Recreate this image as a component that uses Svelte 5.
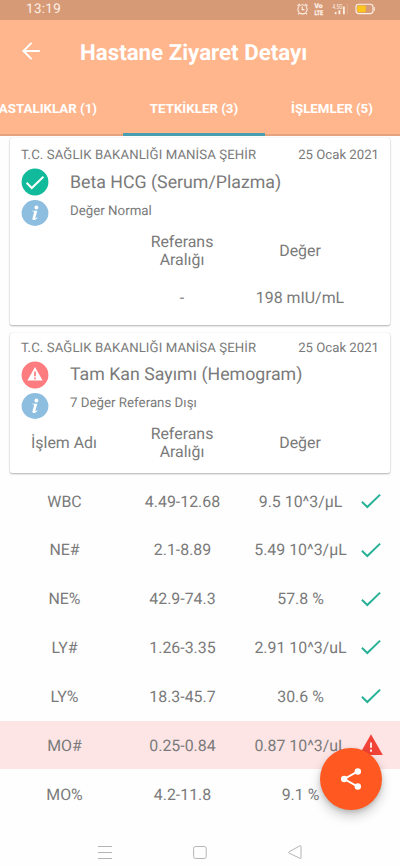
<script>
  const results = [
    { name: 'WBC', range: '4.49-12.68', value: '9.5 10^3/µL', ok: true },
    { name: 'NE#', range: '2.1-8.89', value: '5.49 10^3/µL', ok: true },
    { name: 'NE%', range: '42.9-74.3', value: '57.8 %', ok: true },
    { name: 'LY#', range: '1.26-3.35', value: '2.91 10^3/uL', ok: true },
    { name: 'LY%', range: '18.3-45.7', value: '30.6 %', ok: true },
    { name: 'MO#', range: '0.25-0.84', value: '0.87 10^3/uL', ok: false },
    { name: 'MO%', range: '4.2-11.8', value: '9.1 %', ok: true }
  ];
</script>

{#snippet cardHead(title, note, ok)}
  <div class="meta">
    <span class="hospital">T.C. SAĞLIK BAKANLIĞI MANİSA ŞEHİR</span>
    <span class="date">25 Ocak 2021</span>
  </div>
  <div class="line title-line">
    <svg width="28" height="28" viewBox="0 0 28 28">
      {#if ok}
        <circle cx="14" cy="14" r="13.4" fill="#10ba9b" />
        <path d="M5.6 14.8l5.2 5.2L22.4 8.8" fill="none" stroke="#fff" stroke-width="2" />
      {:else}
        <circle cx="14" cy="14" r="13.4" fill="#fd7c80" />
        <path d="M14 6L21.6 19.4H6.4z" fill="#fff" />
        <path d="M14 10.6v4.6M14 16.4v1.8" stroke="#fd7c80" stroke-width="1.7" />
      {/if}
    </svg>
    <h2>{title}</h2>
  </div>
  <div class="line note-line">
    <svg width="28" height="28" viewBox="0 0 28 28">
      <ellipse cx="14" cy="14" rx="13.4" ry="12.9" fill="#8dbee0" />
      <circle cx="15.4" cy="8.5" r="1.9" fill="#fff" />
      <path d="M11 11.7h5.3l-2 7.2c-.2.8.5.7 1.7-.7l.6.5c-2 2.8-5.6 3.4-5.1.6l1.6-6.3c.1-.5-.4-.6-2.1-.7z" fill="#fff" />
    </svg>
    <p>{note}</p>
  </div>
{/snippet}

<div class="screen">
  <header>
    <div class="status">
      <span class="clock">13:19</span>
      <svg width="78" height="20" viewBox="297 0 78 20">
        <g fill="none" stroke="#fff0e6" stroke-width="1.1">
          <circle cx="302.5" cy="9.3" r="4.6" />
          <path d="M302.2 6.6v3h2.2M297.4 5.8l2.3-2M307.6 5.8l-2.3-2M299.2 13.2l-1 1.2M305.8 13.2l1 1.2" />
        </g>
        <g fill="#fff0e6" stroke="#fff0e6" stroke-width=".3" font-family="Roboto, sans-serif" font-weight="700">
          <text x="314.5" y="8.4" font-size="6.4" textLength="8" lengthAdjust="spacingAndGlyphs">Vo</text>
          <text x="314.5" y="14.5" font-size="6.4" textLength="8.5" lengthAdjust="spacingAndGlyphs">LTE</text>
          <text x="332.5" y="9" font-size="7" font-weight="400" stroke="none" textLength="10" lengthAdjust="spacingAndGlyphs">4.5G</text>
        </g>
        <path d="M334.8 12h1.7v2.2h-1.7zM338.5 10.2h1.8v4h-1.8zM343 6.5h1.8v7.7H343z" fill="#fff0e6" />
        <path d="M347.5 4v10" stroke="#e5b797" stroke-width=".6" />
        <rect x="356" y="4.2" width="17" height="9.4" rx="2.8" fill="none" stroke="#fff0e6" stroke-width="1.1" />
        <path d="M374.3 7.2v3.5" stroke="#fff0e6" stroke-width="1" />
        <rect x="357.3" y="5.6" width="8.5" height="6.6" rx="1.3" fill="#fcc51e" />
      </svg>
    </div>
    <div class="appbar">
      <svg width="20" height="20" viewBox="0 0 20 20" fill="none" stroke="#fff" stroke-width="1.9">
        <path d="M18.8 10H2.8M10.6 1.8L2.4 10l8.2 8.2" />
      </svg>
      <h1>Hastane Ziyaret Detayı</h1>
    </div>
    <nav>
      <button class="first"><span>HASTALIKLAR (1)</span></button>
      <button class="active"><span>TETKİKLER (3)</span></button>
      <button class="last"><span>İŞLEMLER (5)</span></button>
    </nav>
  </header>

  <main>
    <section class="card">
      {@render cardHead('Beta HCG (Serum/Plazma)', 'Değer Normal', true)}
      <div class="cols heads"><span></span><span>Referans<br />Aralığı</span><span>Değer</span></div>
      <div class="cols single"><span></span><span>-</span><span>198 mIU/mL</span></div>
    </section>
    <section class="card second">
      {@render cardHead('Tam Kan Sayımı (Hemogram)', '7 Değer Referans Dışı', false)}
      <div class="cols heads"><span>İşlem Adı</span><span>Referans<br />Aralığı</span><span>Değer</span></div>
    </section>
    <div class="results">
      {#each results as r}
        <div class="row" class:bad={!r.ok}>
          <span>{r.name}</span><span>{r.range}</span><span>{r.value}</span>
          <svg width="24" height="24" viewBox="0 0 24 24">
            {#if r.ok}
              <path d="M2.9 12.8l5.4 5.2L21.1 5.6" fill="none" stroke="#27b196" stroke-width="2" />
            {:else}
              <path d="M12 1.2L23.8 22H.2z" fill="#f14337" />
              <path d="M12 9.5v5.2M12 16.6v2.2" stroke="#fde5e5" stroke-width="2" />
            {/if}
          </svg>
        </div>
      {/each}
    </div>
  </main>

  <footer>
    <svg width="14" height="14" viewBox="0 0 14 14" fill="none" stroke="#b4b4b4"><path d="M0 1.5h14M0 7.5h14M0 13.5h14" /></svg>
    <svg width="14" height="14" viewBox="0 0 14 14" fill="none" stroke="#b4b4b4"><rect x=".6" y="1.5" width="12.6" height="12" rx="2" /></svg>
    <svg width="14" height="14" viewBox="0 0 14 14" fill="none" stroke="#b4b4b4" stroke-linejoin="round"><path d="M13 1.6v11.2q0 1-1 .6L1 8q-1-.6 0-1.2L12 .8q1-.4 1 .8z" /></svg>
  </footer>

  <button class="fab" aria-label="Paylaş">
    <svg width="24" height="24" viewBox="0 0 24 24" fill="#fff">
      <path d="M18.8 4.3L5.2 12l13.6 7.7" fill="none" stroke="#fff" stroke-width="1.9" />
      <circle cx="18.8" cy="4.5" r="3.2" /><circle cx="5.2" cy="12" r="3.2" /><circle cx="18.8" cy="19.5" r="3.2" />
    </svg>
  </button>
</div>

<style>
  .screen {
    position: relative;
    width: 400px;
    height: 866px;
    overflow: hidden;
    display: flex;
    flex-direction: column;
    background: #fefefe;
    color: #7a7a7a;
    font-family: Roboto, 'Noto Sans', sans-serif;
    text-rendering: geometricPrecision;
  }
  svg { display: block; flex: none; }
  h1, h2, p { margin: 0; font-weight: 400; white-space: nowrap; }
  button { border: 0; padding: 0; background: none; font: inherit; color: inherit; }
  header { height: 136px; flex: none; background: #ffb68d; color: #fff; }
  .status {
    height: 20px;
    display: flex;
    justify-content: space-between;
    padding: 0 25px 0 26px;
    background: #d69a77;
  }
  .clock { font-size: 13.4px; line-height: 19px; letter-spacing: .35px; color: #fff0e6; }
  .appbar { height: 62px; display: flex; align-items: center; padding-left: 21px; }
  h1 { margin: 3px 0 0 39px; font-size: 22.3px; font-weight: 700; line-height: 28px; }
  nav {
    height: 54px;
    box-sizing: border-box;
    display: flex;
    border-bottom: 2px solid #e3a37f;
    font-size: 13.3px;
    font-weight: 700;
  }
  nav button {
    box-sizing: border-box;
    height: 54px;
    flex: none;
    display: flex;
    justify-content: center;
    padding-top: 19.4px;
    line-height: 16px;
    white-space: nowrap;
  }
  .first { width: 122.5px; justify-content: flex-end; padding-right: 25.5px; }
  .active { width: 142px; padding-left: 1px; border-bottom: 3px solid #499eb1; }
  .last { width: 135px; }
  main { flex: 1; padding-top: 2px; }
  .card {
    box-sizing: border-box;
    height: 187px;
    margin: 0 10px 8px;
    border-radius: 2px;
    background: #fff;
    box-shadow: 0 1px 2px rgba(0, 0, 0, .3), 0 0 1px rgba(0, 0, 0, .15);
  }
  .second { height: 140px; margin-bottom: 3.5px; }
  .meta {
    height: 30px;
    display: flex;
    justify-content: space-between;
    padding: 0 11px;
    font-size: 13.2px;
    line-height: 35px;
    white-space: nowrap;
  }
  .second .meta { height: 28px; line-height: 31px; }
  .hospital { letter-spacing: .1px; }
  .line { display: flex; align-items: center; padding-left: 10.5px; }
  .title-line { height: 28px; }
  .second .title-line { margin-top: -.5px; }
  .note-line { height: 28px; margin-top: 3px; }
  h2 { margin: 1px 0 0 21.5px; font-size: 17.75px; line-height: 28px; }
  p { margin: -3px 0 0 21.5px; font-size: 13.3px; line-height: 18px; }
  .cols, .row {
    display: grid;
    grid-template-columns: 118px 118px 118px 24px;
    align-items: center;
    text-align: center;
    font-size: 15.9px;
    line-height: 18px;
    white-space: nowrap;
  }
  .cols { margin-left: -5px; }
  .heads { height: 47px; }
  .second .heads { height: 46px; }
  .single { height: 48px; }
  .row { height: 48.83px; padding-left: 5.5px; }
  .row span { padding-top: 1.4px; }
  .row svg { margin-left: -1px; }
  .row.bad { background: #fde5e5; }
  footer {
    height: 21px;
    flex: none;
    display: flex;
    justify-content: center;
    gap: 81px;
  }
  .fab {
    position: absolute;
    left: 320px;
    top: 748px;
    width: 62px;
    height: 62px;
    display: flex;
    align-items: center;
    justify-content: center;
    border-radius: 50%;
    background: #ff5820;
    box-shadow: 0 6px 12px rgba(0, 0, 0, .2), 0 2px 4px rgba(0, 0, 0, .14);
  }
  .fab svg { margin-top: -1px; }
</style>
